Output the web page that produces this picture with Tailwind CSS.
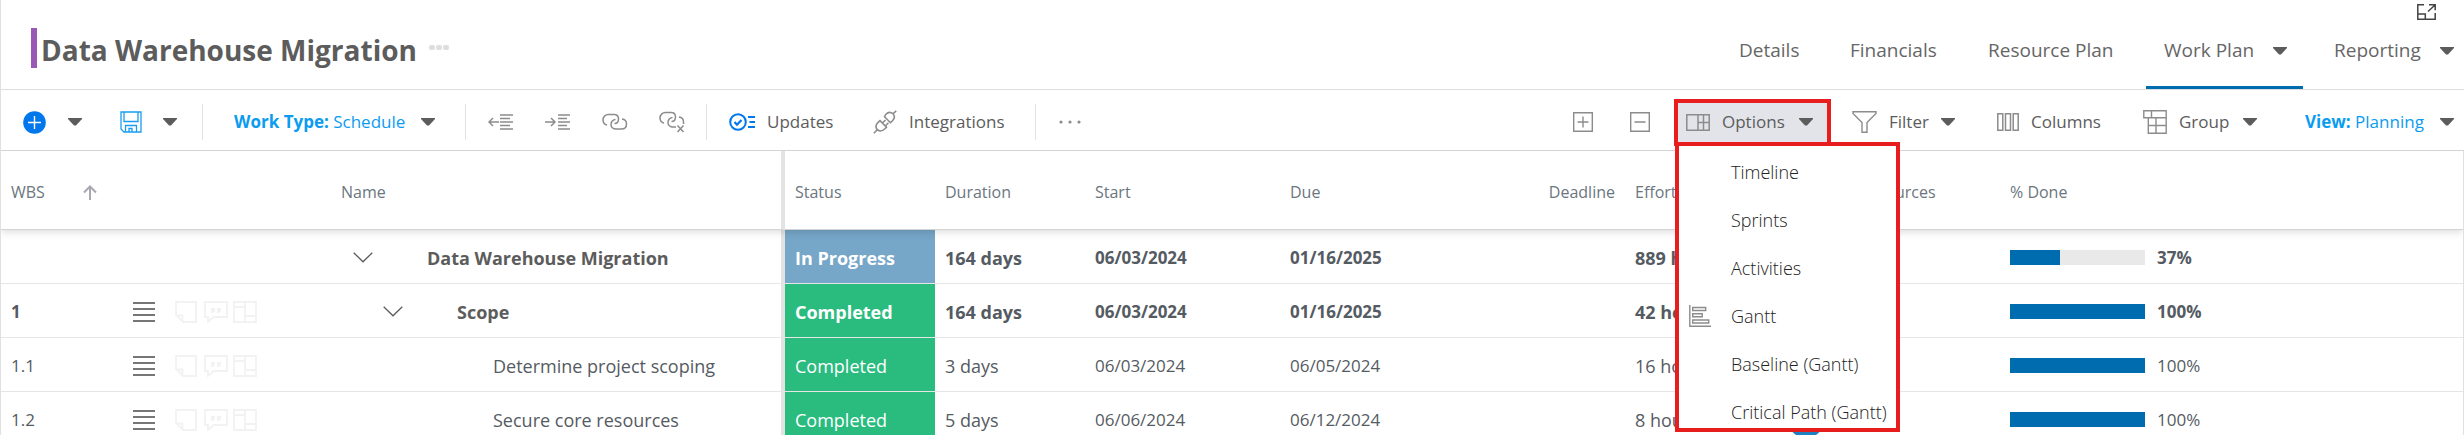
<!DOCTYPE html>
<html lang="en">
<head>
<meta charset="utf-8">
<title>Data Warehouse Migration</title>
<script src="https://cdn.jsdelivr.net/npm/@tailwindcss/browser@4"></script>
</head>
<body class="bg-white font-['Open_Sans',sans-serif] text-[#5c5c5c]">

<svg class="hidden" aria-hidden="true">
  <symbol id="caret" viewBox="0 0 14 8"><path d="M0 0h14v1L8 7.500H6L0 1z" fill="#5c5c5c"/></symbol>
  <symbol id="chevron" viewBox="0 0 20 11"><path d="M.7.700 10 9.800 19.300.700" fill="none" stroke="#5c5c5c" stroke-width="1.300"/></symbol>
  <symbol id="lines" viewBox="0 0 22 20"><path d="M0 1h22M0 7h22M0 13h22M0 19h22" stroke="#4a4a4a" stroke-width="1.500"/></symbol>
  <symbol id="note" viewBox="0 0 22 22"><path d="M1 1h20v20H8L1 14zM1 14.500h6.500V21" fill="none" stroke="#f2f2f2" stroke-width="1.800"/></symbol>
  <symbol id="comment" viewBox="0 0 24 22"><path d="M1 1h22v15H9.500L4 21v-5H1z" fill="none" stroke="#f2f2f2" stroke-width="1.800"/><path d="M7 7h4v3l-2 2H7zM13 7h4v3l-2 2h-2z" fill="#f2f2f2"/></symbol>
  <symbol id="board" viewBox="0 0 24 22"><path d="M1 1h22v20H1zM12 1v20M1 6h11M12 15h11" fill="none" stroke="#f2f2f2" stroke-width="1.800"/></symbol>
</svg>

<div class="flex h-screen flex-col overflow-hidden border-l border-[#e0e0e0]">

  <!-- Title and section tabs -->
  <header class="relative flex h-[90px] shrink-0 justify-between border-b border-[#dedede]">
    <div class="flex items-center pt-1.5 pl-[30px]">
      <span class="h-10 w-1.5 bg-[#9b59b6]"></span>
      <h1 class="ml-1 pt-1 text-[28px] font-bold whitespace-nowrap">Data Warehouse Migration</h1>
      <button type="button" aria-label="More" class="ml-3 flex gap-px">
        <span class="h-[5px] w-1.5 rounded-xs bg-[#dedede]"></span>
        <span class="h-[5px] w-1.5 rounded-xs bg-[#dedede]"></span>
        <span class="h-[5px] w-1.5 rounded-xs bg-[#dedede]"></span>
      </button>
    </div>
    <nav class="flex text-[19px] whitespace-nowrap text-[#666]">
      <a href="#" class="flex w-[111px] items-center pt-3">Details</a>
      <a href="#" class="flex w-[138px] items-center pt-3">Financials</a>
      <a href="#" class="flex w-[158px] items-center pt-3">Resource Plan</a>
      <a href="#" aria-current="page" class="flex w-[157px] items-center justify-between border-b-3 border-[#006cb0] pt-[15px] pr-4 pl-[18px]">Work Plan<svg class="h-2 w-3.5"><use href="#caret"/></svg></a>
      <a href="#" class="flex w-[161px] items-center justify-between pt-3 pr-2.5 pl-[31px]">Reporting<svg class="h-2 w-3.5"><use href="#caret"/></svg></a>
    </nav>
    <button type="button" aria-label="Open in new window" class="absolute top-1 right-7">
      <svg class="h-4 w-[19px]" viewBox="0 0 19 16" fill="none" stroke="#444" stroke-width="1.500"><path d="M7 .8H.8v14.400h17.400V9M.8 10h7.500v5.200M11 7.500l7-6.500M12 .8h6.200v5.500"/></svg>
    </button>
  </header>

  <!-- Toolbar -->
  <div role="toolbar" class="flex h-[61px] shrink-0 items-center justify-between border-b border-[#d4d4d4] pt-1 text-[17px] whitespace-nowrap">
    <div class="flex items-center">
      <button type="button" aria-label="Add" class="w-[57px] pl-[22px]"><svg class="h-[23px] w-[23px]" viewBox="0 0 23 23"><circle cx="11.500" cy="11.500" r="11.300" fill="#0078ec"/><path d="M11.500 5v13M5 11.500h13" stroke="#fff" stroke-width="1.400"/></svg></button>
      <button type="button" aria-label="Add options" class="w-[34px] pl-2.5"><svg class="h-2 w-3.5"><use href="#caret"/></svg></button>
      <button type="button" aria-label="Save" class="w-14 pl-7"><svg class="h-[22px] w-[22px]" viewBox="0 0 22 22" fill="none" stroke="#1a9df0" stroke-width="1.300"><path d="M1 1h20v20H4l-3-3zM4 1v9.500h14V1M5.500 21v-6.500h11V21M9 21v-3.500h3V21"/></svg></button>
      <button type="button" aria-label="Save options" class="w-[54px] pl-[15px]"><svg class="h-2 w-3.5"><use href="#caret"/></svg></button>
      <span class="h-9 w-px bg-[#e2e2e2]"></span>
      <button type="button" class="flex w-[262px] items-center justify-between pr-[30px] pl-[31px] text-[#0b9cf0]"><span><b>Work Type:</b> Schedule</span><svg class="h-2 w-3.5"><use href="#caret"/></svg></button>
      <span class="h-9 w-px bg-[#e2e2e2]"></span>
      <button type="button" aria-label="Outdent" class="w-[57px] pl-[22px]"><svg class="h-4 w-[26px]" viewBox="0 0 26 16" fill="none" stroke="#8c8c8c" stroke-width="1.500"><path d="M12 1h13M12 4.500h10M12 8h13M12 11.500h10M12 15h13M11 8H1M5 4 1 8l4 4"/></svg></button>
      <button type="button" aria-label="Indent" class="w-[57px] pl-[22px]"><svg class="h-4 w-[26px]" viewBox="0 0 26 16" fill="none" stroke="#8c8c8c" stroke-width="1.500"><path d="M13 1h12M13 4.500h9M13 8h12M13 11.500h9M13 15h12M0 8h10M6 4l4 4-4 4"/></svg></button>
      <button type="button" aria-label="Link" class="w-[57px] pl-[22px]"><svg class="h-[18px] w-[26px]" viewBox="0 0 26 18" fill="none" stroke="#8c8c8c" stroke-width="1.500"><path d="M5 12C2.500 11.500 1 9.500 1 7c0-3 2.300-5.500 5.500-5.500H12c3 0 4.500 2 4.500 4.500S15 10.500 12.500 10.500M20 6c3 .3 4.500 2 4.500 5 0 3-2 5-5 5H14c-3 0-5-2-5-4.500S11 6.500 13.500 6.500"/></svg></button>
      <button type="button" aria-label="Unlink" class="w-[69px] pl-[22px]"><svg class="h-[22px] w-[26px]" viewBox="0 0 26 22" fill="none" stroke="#8c8c8c" stroke-width="1.500"><path d="M5 12C2.500 11.500 1 9.500 1 7c0-3 2.300-5.500 5.500-5.500H12c3 0 4.500 2 4.500 4.500S15 10.500 12.500 10.500M20 6c3 .3 4.500 2 4.500 5v2M17 16h-3c-3 0-5-2-5-4.500S11 6.500 13.500 6.500M18.500 14.500l6 6.500M24.500 14.500l-6 6.500"/></svg></button>
      <span class="h-9 w-px bg-[#e2e2e2]"></span>
      <button type="button" class="flex w-36 items-center gap-3 pl-[22px]"><svg class="h-[18px] w-[26px]" viewBox="0 0 26 18" fill="none" stroke="#0078ec" stroke-width="2"><circle cx="9" cy="9" r="7.800"/><path d="m5.500 9 2.500 2.700L12.500 7M19 4h7M20.500 9H26M19 14h7" stroke-width="2.200"/></svg>Updates</button>
      <button type="button" class="flex w-46 items-center gap-3 pl-[22px]"><svg class="h-6 w-6" viewBox="0 0 24 24" fill="none" stroke="#8c8c8c" stroke-width="1.600"><path d="m.8 23.200 3.500-3.500M4.300 19.700c-2.300-2.500-1.300-5.500 1-7.500l1.700-1.500 6.500 6.500-1.600 1.600c-2.200 2.200-5 3-7.600.9zM9.500 13l3-3M12.500 15.800l3-3M11.500 6.700l6 6 2-2c2.200-2.200 2.500-4.700.5-7-2.500-2-5-1.700-7 .5zM19.800 4 23.200.8"/></svg>Integrations</button>
      <span class="h-9 w-px bg-[#e2e2e2]"></span>
      <button type="button" aria-label="More actions" class="pl-[23px]"><svg class="h-1 w-[22px]" viewBox="0 0 22 4" fill="#8c8c8c"><circle cx="2" cy="2" r="1.600"/><circle cx="11" cy="2" r="1.600"/><circle cx="20" cy="2" r="1.600"/></svg></button>
    </div>

    <div class="flex items-center">
      <button type="button" aria-label="Expand all" class="w-[57px] pl-[9px]"><svg class="h-5 w-5" viewBox="0 0 20 20" fill="none" stroke="#8c8c8c" stroke-width="1.400"><path d="M.7.700h18.600v18.600H.7zM10 4.500v11M4.500 10h11"/></svg></button>
      <button type="button" aria-label="Collapse all" class="w-[53px] pl-[9px]"><svg class="h-5 w-5" viewBox="0 0 20 20" fill="none" stroke="#8c8c8c" stroke-width="1.400"><path d="M.7.700h18.600v18.600H.7zM4.500 10h11"/></svg></button>
      <div class="relative">
        <button type="button" aria-haspopup="menu" aria-expanded="true" class="flex h-[47px] w-[157px] items-center border-4 border-[#e81e1e] bg-[#e3e4ea] pr-3.5 pl-2">
          <svg class="h-[17px] w-6" viewBox="0 0 24 17" fill="none" stroke="#8c8c8c" stroke-width="1.500"><path d="M.8.800h22.400v15.400H.8zM12 .8v15.400M17.500.800v15.400M12 8.500h11"/></svg>
          <span class="ml-3">Options</span>
          <svg class="ml-auto h-2 w-3.5"><use href="#caret"/></svg>
        </button>
        <ul role="menu" class="absolute top-[43px] left-px z-20 h-[290px] w-[225px] overflow-hidden border-4 border-[#e81e1e] bg-white pt-0.5 text-lg font-light text-[#222]">
          <li><button type="button" role="menuitem" class="flex h-12 w-full items-center pl-[52px]">Timeline</button></li>
          <li><button type="button" role="menuitem" class="flex h-12 w-full items-center pl-[52px]">Sprints</button></li>
          <li><button type="button" role="menuitem" class="flex h-12 w-full items-center pl-[52px]">Activities</button></li>
          <li><button type="button" role="menuitem" class="flex h-12 w-full items-center gap-5 pl-2.5"><svg class="h-[22px] w-[22px]" viewBox="0 0 22 22" fill="none" stroke="#8c8c8c" stroke-width="1.400"><path d="M.8 0v21.200H22M3.700 2.500h13V5.500h-13zM3.700 8.800h9.500v3H3.700zM3.700 15h16v3h-16z"/></svg>Gantt</button></li>
          <li><button type="button" role="menuitem" class="flex h-12 w-full items-center pl-[52px]">Baseline (Gantt)</button></li>
          <li><button type="button" role="menuitem" class="flex h-12 w-full items-center pl-[52px]">Critical Path (Gantt)</button></li>
        </ul>
      </div>
      <button type="button" class="flex w-[153px] items-center pr-[29px] pl-[21px]"><svg class="h-[22px] w-[25px]" viewBox="0 0 25 22" fill="none" stroke="#8c8c8c" stroke-width="1.400"><path d="M1 .8h23v1.700l-9 9v9.700h-5v-9.700l-9-9z"/></svg><span class="ml-3">Filter</span><svg class="ml-auto h-2 w-3.5"><use href="#caret"/></svg></button>
      <button type="button" class="flex w-[148px] items-center pl-[13px]"><svg class="h-[18px] w-[22px]" viewBox="0 0 22 18" fill="none" stroke="#8c8c8c" stroke-width="1.500"><path d="M.8.800h5v16.400h-5zM8.500.800h5v16.400h-5zM16.200.800h5v16.400h-5z"/></svg><span class="ml-3">Columns</span></button>
      <button type="button" class="flex w-40 items-center pr-[35px] pl-[11px]"><svg class="h-6 w-6" viewBox="0 0 24 24" fill="none" stroke="#8c8c8c" stroke-width="1.400"><path d="M.8.800h22.400v7H.8zM8.500.800v7M5.300 7.800v15.400h17.900V7.800M5.300 15.500h17.900M13 7.800v15.400"/></svg><span class="ml-3">Group</span><svg class="ml-auto h-2 w-3.5"><use href="#caret"/></svg></button>
      <button type="button" class="flex w-[172px] items-center justify-between pr-2.5 pl-[13px] text-[#0b9cf0]"><span><b>View:</b> Planning</span><svg class="h-2 w-3.5"><use href="#caret"/></svg></button>
    </div>
  </div>

  <!-- Work plan grid -->
  <div class="min-h-0 flex-1 overflow-hidden border-r border-[#e0e0e0]">
    <table class="w-full table-fixed border-separate border-spacing-0 text-left text-[17px] whitespace-nowrap [&_td]:border-b [&_td]:border-b-[#e6e6e6] [&_td]:px-2.5 [&_td]:pt-0.5 [&_tr]:h-[54px]">
      <colgroup>
        <col class="w-[122px]"><col class="w-[208px]"><col class="w-[454px]"><col class="w-[150px]"><col class="w-[150px]"><col class="w-[195px]"><col class="w-[195px]"><col class="w-[150px]"><col class="w-[153px]"><col class="w-[222px]"><col>
      </colgroup>
      <thead class="relative z-10 text-base text-[#6b7680] shadow-[0_2px_8px_rgba(0,0,0,0.15)] [&_th]:h-[79px] [&_th]:border-b [&_th]:border-b-[#d4d4d4] [&_th]:bg-white [&_th]:px-2.5 [&_th]:pt-1 [&_th]:font-normal">
        <tr>
          <th scope="col"><span class="flex items-center justify-between pr-4">WBS<svg class="h-[15px] w-3.5" viewBox="0 0 14 15" fill="none" stroke="#a8a8b0" stroke-width="2"><path d="M7 15V2M1 7.500l6-6 6 6"/></svg></span></th>
          <th scope="col"></th>
          <th scope="col" class="border-r-4 border-r-[#e3e3e3]">Name</th>
          <th scope="col">Status</th>
          <th scope="col">Duration</th>
          <th scope="col">Start</th>
          <th scope="col">Due</th>
          <th scope="col" class="text-right">Deadline</th>
          <th scope="col">Effort</th>
          <th scope="col">Assigned Resources</th>
          <th scope="col">% Done</th>
        </tr>
      </thead>
      <tbody class="text-[#555b62]">
        <tr class="font-bold">
          <td></td>
          <td></td>
          <td class="border-r-4 border-r-[#e3e3e3] text-lg"><span class="flex items-center text-[#5c5c5c]"><button type="button" aria-label="Collapse" class="mr-[54px] ml-3"><svg class="h-[11px] w-5"><use href="#chevron"/></svg></button>Data Warehouse Migration</span></td>
          <td class="bg-[#76a6c8] text-lg text-white">In Progress</td>
          <td class="text-lg">164 days</td>
          <td>06/03/2024</td>
          <td>01/16/2025</td>
          <td></td>
          <td class="text-lg">889 hours</td>
          <td></td>
          <td><span class="flex items-center gap-3"><span class="h-[15px] w-[135px] bg-[#e9e9e9]"><span class="block h-full bg-[#006cb0]" style="width:37%"></span></span>37%</span></td>
        </tr>
        <tr class="font-bold">
          <td>1</td>
          <td><span class="flex items-center"><svg class="mr-5 h-5 w-[22px]"><use href="#lines"/></svg><svg class="mr-[7px] h-[22px] w-[22px]"><use href="#note"/></svg><svg class="mr-[5px] h-[22px] w-6"><use href="#comment"/></svg><svg class="h-[22px] w-6"><use href="#board"/></svg></span></td>
          <td class="border-r-4 border-r-[#e3e3e3] text-lg"><span class="flex items-center text-[#5c5c5c]"><button type="button" aria-label="Collapse" class="mr-[54px] ml-[42px]"><svg class="h-[11px] w-5"><use href="#chevron"/></svg></button>Scope</span></td>
          <td class="bg-[#2abb7f] text-lg text-white">Completed</td>
          <td class="text-lg">164 days</td>
          <td>06/03/2024</td>
          <td>01/16/2025</td>
          <td></td>
          <td class="text-lg">42 hours</td>
          <td></td>
          <td><span class="flex items-center gap-3"><span class="h-[15px] w-[135px] bg-[#e9e9e9]"><span class="block h-full bg-[#006cb0]" style="width:100%"></span></span>100%</span></td>
        </tr>
        <tr>
          <td>1.1</td>
          <td><span class="flex items-center"><svg class="mr-5 h-5 w-[22px]"><use href="#lines"/></svg><svg class="mr-[7px] h-[22px] w-[22px]"><use href="#note"/></svg><svg class="mr-[5px] h-[22px] w-6"><use href="#comment"/></svg><svg class="h-[22px] w-6"><use href="#board"/></svg></span></td>
          <td class="border-r-4 border-r-[#e3e3e3] text-lg"><span class="pl-[152px]">Determine project scoping</span></td>
          <td class="bg-[#2abb7f] text-lg text-white">Completed</td>
          <td class="text-lg">3 days</td>
          <td>06/03/2024</td>
          <td>06/05/2024</td>
          <td></td>
          <td class="text-lg">16 hours</td>
          <td></td>
          <td><span class="flex items-center gap-3"><span class="h-[15px] w-[135px] bg-[#e9e9e9]"><span class="block h-full bg-[#006cb0]" style="width:100%"></span></span>100%</span></td>
        </tr>
        <tr>
          <td>1.2</td>
          <td><span class="flex items-center"><svg class="mr-5 h-5 w-[22px]"><use href="#lines"/></svg><svg class="mr-[7px] h-[22px] w-[22px]"><use href="#note"/></svg><svg class="mr-[5px] h-[22px] w-6"><use href="#comment"/></svg><svg class="h-[22px] w-6"><use href="#board"/></svg></span></td>
          <td class="border-r-4 border-r-[#e3e3e3] text-lg"><span class="pl-[152px]">Secure core resources</span></td>
          <td class="bg-[#2abb7f] text-lg text-white">Completed</td>
          <td class="text-lg">5 days</td>
          <td>06/06/2024</td>
          <td>06/12/2024</td>
          <td></td>
          <td class="text-lg">8 hours</td>
          <td><span class="block h-9 w-9 rounded-full bg-[#2180c0]"></span></td>
          <td><span class="flex items-center gap-3"><span class="h-[15px] w-[135px] bg-[#e9e9e9]"><span class="block h-full bg-[#006cb0]" style="width:100%"></span></span>100%</span></td>
        </tr>
      </tbody>
    </table>
  </div>
</div>
</body>
</html>
